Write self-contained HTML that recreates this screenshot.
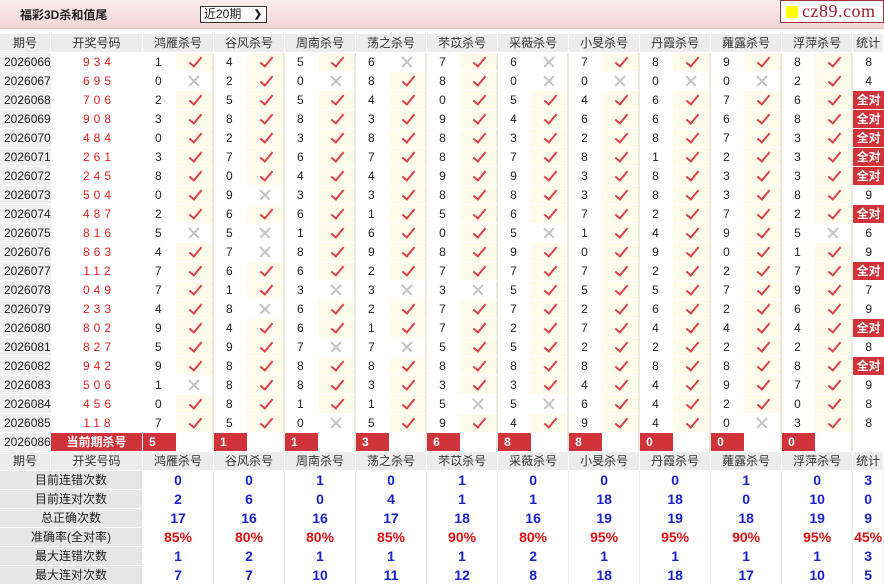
<!DOCTYPE html>
<html><head><meta charset="utf-8">
<style>
body{margin:0;width:884px;height:583px;overflow:hidden;background:#fff;font-family:"Liberation Sans","Noto Sans CJK SC",sans-serif;font-size:12px;color:#222}
.top{position:relative;height:28px;background:linear-gradient(#fbeeee,#f4d6d6);border-bottom:1px solid #e6c2c2;}
.top .t{position:absolute;left:20px;top:6px;font-weight:bold;font-size:12px;color:#222}
.top .sel{position:absolute;left:200px;top:6px;width:62px;height:15px;border:1px solid #333;background:#fff;font-size:12px;line-height:15px;padding-left:3px;box-sizing:content-box}
.top .sel b{position:absolute;right:4px;top:0;font-size:10px}
.logo{position:absolute;left:780px;top:0;width:102px;height:21px;border:1px solid #a0303a;background:#fff}
.logo i{position:absolute;left:5px;top:5px;width:12px;height:12px;background:#ffff00}
.logo span{position:absolute;left:21px;top:0;font-family:"Liberation Serif",serif;font-size:18px;line-height:21px;color:#a01c2a;letter-spacing:0.5px}
table{position:absolute;left:0;top:34px;border-collapse:separate;border-spacing:0;table-layout:fixed;width:884px}
td{height:18px;padding:0;border-bottom:1px solid #fff;line-height:18px;white-space:nowrap;overflow:hidden}
tr.h td{background:#ececec;text-align:center;color:#333;border-right:1px solid #fff}
td.q{background:#f0f0f0;padding-left:4px}
td.k{color:#d22;text-align:center;letter-spacing:4px;padding-left:4px}
td.n{padding-left:12px}
td.y,td.x,td.e{position:relative;border-right:2px solid #ebe8dc}
td.y{background:#fefbea}
td.y::after{content:"";position:absolute;left:16px;top:1px;width:5px;height:11px;border-right:2px solid #e0404c;border-bottom:2px solid #e0404c;transform:rotate(40deg)}
td.x::before,td.x::after{content:"";position:absolute;left:11px;top:8px;width:14px;height:1.5px;background:#c4c4c4;transform:rotate(45deg)}
td.x::after{transform:rotate(-45deg)}
td.s{text-align:center}
td.a{background:#d0343a;color:#fff;font-weight:bold}
td.r{background:#d0343a;color:#fff;font-weight:bold;text-align:center;border-right:1px solid #fff}
td.c{background:#d0343a;color:#fff;font-weight:bold;padding-left:6px}
td.l{background:#e6e6e6;text-align:center;color:#222;border-right:1px solid #fff}
td.v{text-align:center;color:#1a22cc;font-weight:bold;font-size:14px;border-right:1px solid #eee}
td.p{text-align:center;color:#e01010;font-weight:bold;font-size:14px;border-right:1px solid #eee}
</style></head><body>
<div class="top"><div class="t">福彩3D杀和值尾</div><div class="sel">近20期<b>&#10095;</b></div><div class="logo"><i></i><span>cz89.com</span></div></div>
<table>
<colgroup><col style="width:51px"><col style="width:92px">
<col style="width:33px"><col style="width:38px"><col style="width:33px"><col style="width:38px"><col style="width:33px"><col style="width:38px"><col style="width:33px"><col style="width:38px"><col style="width:33px"><col style="width:38px"><col style="width:33px"><col style="width:38px"><col style="width:33px"><col style="width:38px"><col style="width:33px"><col style="width:38px"><col style="width:33px"><col style="width:38px"><col style="width:33px"><col style="width:38px">
<col style="width:31px"></colgroup>
<tr class="h"><td>期号</td><td>开奖号码</td><td colspan="2">鸿雁杀号</td><td colspan="2">谷风杀号</td><td colspan="2">周南杀号</td><td colspan="2">荡之杀号</td><td colspan="2">芣苡杀号</td><td colspan="2">采薇杀号</td><td colspan="2">小旻杀号</td><td colspan="2">丹霞杀号</td><td colspan="2">蕹露杀号</td><td colspan="2">浮萍杀号</td><td>统计</td></tr>
<tr><td class="q">2026066</td><td class="k">934</td><td class="n">1</td><td class="y"></td><td class="n">4</td><td class="y"></td><td class="n">5</td><td class="y"></td><td class="n">6</td><td class="x"></td><td class="n">7</td><td class="y"></td><td class="n">6</td><td class="x"></td><td class="n">7</td><td class="y"></td><td class="n">8</td><td class="y"></td><td class="n">9</td><td class="y"></td><td class="n">8</td><td class="y"></td><td class="s">8</td></tr>
<tr><td class="q">2026067</td><td class="k">695</td><td class="n">0</td><td class="x"></td><td class="n">2</td><td class="y"></td><td class="n">0</td><td class="x"></td><td class="n">8</td><td class="y"></td><td class="n">8</td><td class="y"></td><td class="n">0</td><td class="x"></td><td class="n">0</td><td class="x"></td><td class="n">0</td><td class="x"></td><td class="n">0</td><td class="x"></td><td class="n">2</td><td class="y"></td><td class="s">4</td></tr>
<tr><td class="q">2026068</td><td class="k">706</td><td class="n">2</td><td class="y"></td><td class="n">5</td><td class="y"></td><td class="n">5</td><td class="y"></td><td class="n">4</td><td class="y"></td><td class="n">0</td><td class="y"></td><td class="n">5</td><td class="y"></td><td class="n">4</td><td class="y"></td><td class="n">6</td><td class="y"></td><td class="n">7</td><td class="y"></td><td class="n">6</td><td class="y"></td><td class="s a">全对</td></tr>
<tr><td class="q">2026069</td><td class="k">908</td><td class="n">3</td><td class="y"></td><td class="n">8</td><td class="y"></td><td class="n">8</td><td class="y"></td><td class="n">3</td><td class="y"></td><td class="n">9</td><td class="y"></td><td class="n">4</td><td class="y"></td><td class="n">6</td><td class="y"></td><td class="n">6</td><td class="y"></td><td class="n">6</td><td class="y"></td><td class="n">8</td><td class="y"></td><td class="s a">全对</td></tr>
<tr><td class="q">2026070</td><td class="k">484</td><td class="n">0</td><td class="y"></td><td class="n">2</td><td class="y"></td><td class="n">3</td><td class="y"></td><td class="n">8</td><td class="y"></td><td class="n">8</td><td class="y"></td><td class="n">3</td><td class="y"></td><td class="n">2</td><td class="y"></td><td class="n">8</td><td class="y"></td><td class="n">7</td><td class="y"></td><td class="n">3</td><td class="y"></td><td class="s a">全对</td></tr>
<tr><td class="q">2026071</td><td class="k">261</td><td class="n">3</td><td class="y"></td><td class="n">7</td><td class="y"></td><td class="n">6</td><td class="y"></td><td class="n">7</td><td class="y"></td><td class="n">8</td><td class="y"></td><td class="n">7</td><td class="y"></td><td class="n">8</td><td class="y"></td><td class="n">1</td><td class="y"></td><td class="n">2</td><td class="y"></td><td class="n">3</td><td class="y"></td><td class="s a">全对</td></tr>
<tr><td class="q">2026072</td><td class="k">245</td><td class="n">8</td><td class="y"></td><td class="n">0</td><td class="y"></td><td class="n">4</td><td class="y"></td><td class="n">4</td><td class="y"></td><td class="n">9</td><td class="y"></td><td class="n">9</td><td class="y"></td><td class="n">3</td><td class="y"></td><td class="n">8</td><td class="y"></td><td class="n">3</td><td class="y"></td><td class="n">3</td><td class="y"></td><td class="s a">全对</td></tr>
<tr><td class="q">2026073</td><td class="k">504</td><td class="n">0</td><td class="y"></td><td class="n">9</td><td class="x"></td><td class="n">3</td><td class="y"></td><td class="n">3</td><td class="y"></td><td class="n">8</td><td class="y"></td><td class="n">8</td><td class="y"></td><td class="n">3</td><td class="y"></td><td class="n">8</td><td class="y"></td><td class="n">3</td><td class="y"></td><td class="n">8</td><td class="y"></td><td class="s">9</td></tr>
<tr><td class="q">2026074</td><td class="k">487</td><td class="n">2</td><td class="y"></td><td class="n">6</td><td class="y"></td><td class="n">6</td><td class="y"></td><td class="n">1</td><td class="y"></td><td class="n">5</td><td class="y"></td><td class="n">6</td><td class="y"></td><td class="n">7</td><td class="y"></td><td class="n">2</td><td class="y"></td><td class="n">7</td><td class="y"></td><td class="n">2</td><td class="y"></td><td class="s a">全对</td></tr>
<tr><td class="q">2026075</td><td class="k">816</td><td class="n">5</td><td class="x"></td><td class="n">5</td><td class="x"></td><td class="n">1</td><td class="y"></td><td class="n">6</td><td class="y"></td><td class="n">0</td><td class="y"></td><td class="n">5</td><td class="x"></td><td class="n">1</td><td class="y"></td><td class="n">4</td><td class="y"></td><td class="n">9</td><td class="y"></td><td class="n">5</td><td class="x"></td><td class="s">6</td></tr>
<tr><td class="q">2026076</td><td class="k">863</td><td class="n">4</td><td class="y"></td><td class="n">7</td><td class="x"></td><td class="n">8</td><td class="y"></td><td class="n">9</td><td class="y"></td><td class="n">8</td><td class="y"></td><td class="n">9</td><td class="y"></td><td class="n">0</td><td class="y"></td><td class="n">9</td><td class="y"></td><td class="n">0</td><td class="y"></td><td class="n">1</td><td class="y"></td><td class="s">9</td></tr>
<tr><td class="q">2026077</td><td class="k">112</td><td class="n">7</td><td class="y"></td><td class="n">6</td><td class="y"></td><td class="n">6</td><td class="y"></td><td class="n">2</td><td class="y"></td><td class="n">7</td><td class="y"></td><td class="n">7</td><td class="y"></td><td class="n">7</td><td class="y"></td><td class="n">2</td><td class="y"></td><td class="n">2</td><td class="y"></td><td class="n">7</td><td class="y"></td><td class="s a">全对</td></tr>
<tr><td class="q">2026078</td><td class="k">049</td><td class="n">7</td><td class="y"></td><td class="n">1</td><td class="y"></td><td class="n">3</td><td class="x"></td><td class="n">3</td><td class="x"></td><td class="n">3</td><td class="x"></td><td class="n">5</td><td class="y"></td><td class="n">5</td><td class="y"></td><td class="n">5</td><td class="y"></td><td class="n">7</td><td class="y"></td><td class="n">9</td><td class="y"></td><td class="s">7</td></tr>
<tr><td class="q">2026079</td><td class="k">233</td><td class="n">4</td><td class="y"></td><td class="n">8</td><td class="x"></td><td class="n">6</td><td class="y"></td><td class="n">2</td><td class="y"></td><td class="n">7</td><td class="y"></td><td class="n">7</td><td class="y"></td><td class="n">2</td><td class="y"></td><td class="n">6</td><td class="y"></td><td class="n">2</td><td class="y"></td><td class="n">6</td><td class="y"></td><td class="s">9</td></tr>
<tr><td class="q">2026080</td><td class="k">802</td><td class="n">9</td><td class="y"></td><td class="n">4</td><td class="y"></td><td class="n">6</td><td class="y"></td><td class="n">1</td><td class="y"></td><td class="n">7</td><td class="y"></td><td class="n">2</td><td class="y"></td><td class="n">7</td><td class="y"></td><td class="n">4</td><td class="y"></td><td class="n">4</td><td class="y"></td><td class="n">4</td><td class="y"></td><td class="s a">全对</td></tr>
<tr><td class="q">2026081</td><td class="k">827</td><td class="n">5</td><td class="y"></td><td class="n">9</td><td class="y"></td><td class="n">7</td><td class="x"></td><td class="n">7</td><td class="x"></td><td class="n">5</td><td class="y"></td><td class="n">5</td><td class="y"></td><td class="n">2</td><td class="y"></td><td class="n">2</td><td class="y"></td><td class="n">2</td><td class="y"></td><td class="n">2</td><td class="y"></td><td class="s">8</td></tr>
<tr><td class="q">2026082</td><td class="k">942</td><td class="n">9</td><td class="y"></td><td class="n">8</td><td class="y"></td><td class="n">8</td><td class="y"></td><td class="n">8</td><td class="y"></td><td class="n">8</td><td class="y"></td><td class="n">8</td><td class="y"></td><td class="n">8</td><td class="y"></td><td class="n">8</td><td class="y"></td><td class="n">8</td><td class="y"></td><td class="n">8</td><td class="y"></td><td class="s a">全对</td></tr>
<tr><td class="q">2026083</td><td class="k">506</td><td class="n">1</td><td class="x"></td><td class="n">8</td><td class="y"></td><td class="n">8</td><td class="y"></td><td class="n">3</td><td class="y"></td><td class="n">3</td><td class="y"></td><td class="n">3</td><td class="y"></td><td class="n">4</td><td class="y"></td><td class="n">4</td><td class="y"></td><td class="n">9</td><td class="y"></td><td class="n">7</td><td class="y"></td><td class="s">9</td></tr>
<tr><td class="q">2026084</td><td class="k">456</td><td class="n">0</td><td class="y"></td><td class="n">8</td><td class="y"></td><td class="n">1</td><td class="y"></td><td class="n">1</td><td class="y"></td><td class="n">5</td><td class="x"></td><td class="n">5</td><td class="x"></td><td class="n">6</td><td class="y"></td><td class="n">4</td><td class="y"></td><td class="n">2</td><td class="y"></td><td class="n">0</td><td class="y"></td><td class="s">8</td></tr>
<tr><td class="q">2026085</td><td class="k">118</td><td class="n">7</td><td class="y"></td><td class="n">5</td><td class="y"></td><td class="n">0</td><td class="x"></td><td class="n">5</td><td class="y"></td><td class="n">9</td><td class="y"></td><td class="n">4</td><td class="y"></td><td class="n">9</td><td class="y"></td><td class="n">4</td><td class="y"></td><td class="n">0</td><td class="x"></td><td class="n">3</td><td class="y"></td><td class="s">8</td></tr>
<tr><td class="q">2026086</td><td class="r">当前期杀号</td><td class="c">5</td><td class="e"></td><td class="c">1</td><td class="e"></td><td class="c">1</td><td class="e"></td><td class="c">3</td><td class="e"></td><td class="c">6</td><td class="e"></td><td class="c">8</td><td class="e"></td><td class="c">8</td><td class="e"></td><td class="c">0</td><td class="e"></td><td class="c">0</td><td class="e"></td><td class="c">0</td><td class="e"></td><td class="s"></td></tr>
<tr class="h"><td>期号</td><td>开奖号码</td><td colspan="2">鸿雁杀号</td><td colspan="2">谷风杀号</td><td colspan="2">周南杀号</td><td colspan="2">荡之杀号</td><td colspan="2">芣苡杀号</td><td colspan="2">采薇杀号</td><td colspan="2">小旻杀号</td><td colspan="2">丹霞杀号</td><td colspan="2">蕹露杀号</td><td colspan="2">浮萍杀号</td><td>统计</td></tr>
<tr><td class="l" colspan="2">目前连错次数</td><td class="v" colspan="2">0</td><td class="v" colspan="2">0</td><td class="v" colspan="2">1</td><td class="v" colspan="2">0</td><td class="v" colspan="2">1</td><td class="v" colspan="2">0</td><td class="v" colspan="2">0</td><td class="v" colspan="2">0</td><td class="v" colspan="2">1</td><td class="v" colspan="2">0</td><td class="v">3</td></tr>
<tr><td class="l" colspan="2">目前连对次数</td><td class="v" colspan="2">2</td><td class="v" colspan="2">6</td><td class="v" colspan="2">0</td><td class="v" colspan="2">4</td><td class="v" colspan="2">1</td><td class="v" colspan="2">1</td><td class="v" colspan="2">18</td><td class="v" colspan="2">18</td><td class="v" colspan="2">0</td><td class="v" colspan="2">10</td><td class="v">0</td></tr>
<tr><td class="l" colspan="2">总正确次数</td><td class="v" colspan="2">17</td><td class="v" colspan="2">16</td><td class="v" colspan="2">16</td><td class="v" colspan="2">17</td><td class="v" colspan="2">18</td><td class="v" colspan="2">16</td><td class="v" colspan="2">19</td><td class="v" colspan="2">19</td><td class="v" colspan="2">18</td><td class="v" colspan="2">19</td><td class="v">9</td></tr>
<tr><td class="l" colspan="2">准确率(全对率)</td><td class="p" colspan="2">85%</td><td class="p" colspan="2">80%</td><td class="p" colspan="2">80%</td><td class="p" colspan="2">85%</td><td class="p" colspan="2">90%</td><td class="p" colspan="2">80%</td><td class="p" colspan="2">95%</td><td class="p" colspan="2">95%</td><td class="p" colspan="2">90%</td><td class="p" colspan="2">95%</td><td class="p">45%</td></tr>
<tr><td class="l" colspan="2">最大连错次数</td><td class="v" colspan="2">1</td><td class="v" colspan="2">2</td><td class="v" colspan="2">1</td><td class="v" colspan="2">1</td><td class="v" colspan="2">1</td><td class="v" colspan="2">2</td><td class="v" colspan="2">1</td><td class="v" colspan="2">1</td><td class="v" colspan="2">1</td><td class="v" colspan="2">1</td><td class="v">3</td></tr>
<tr><td class="l" colspan="2">最大连对次数</td><td class="v" colspan="2">7</td><td class="v" colspan="2">7</td><td class="v" colspan="2">10</td><td class="v" colspan="2">11</td><td class="v" colspan="2">12</td><td class="v" colspan="2">8</td><td class="v" colspan="2">18</td><td class="v" colspan="2">18</td><td class="v" colspan="2">17</td><td class="v" colspan="2">10</td><td class="v">5</td></tr>
</table>
</body></html>
